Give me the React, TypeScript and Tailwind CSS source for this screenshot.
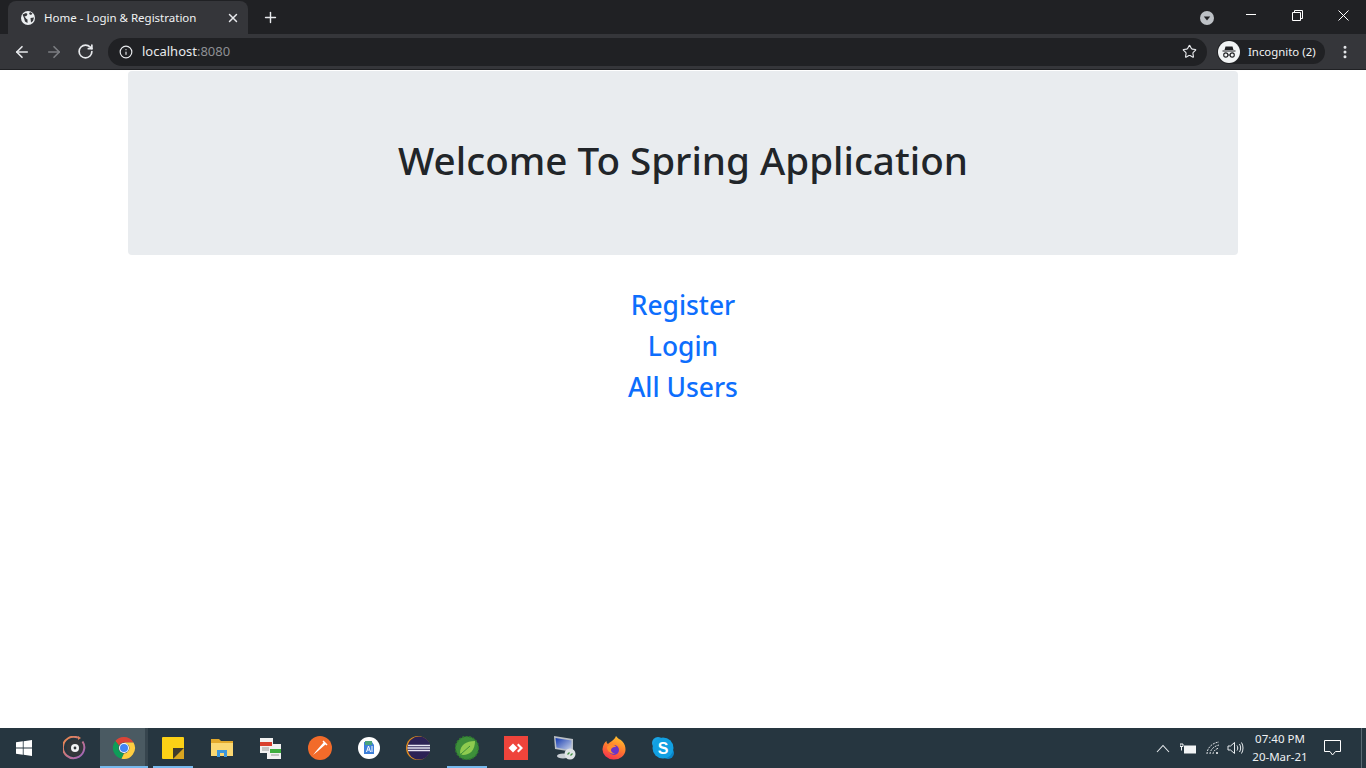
import { ArrowLeft, ArrowRight, Info, MoreVertical, Plus, RotateCw, Star, X } from "lucide-react";

const uiFont = "font-['Noto_Sans','Open_Sans',sans-serif]";

const GlobeIcon = () => (
  <svg width="16" height="16" viewBox="0 0 16 16">
    <circle cx="8" cy="8" r="7" fill="#eceff1" />
    <path d="M2.500 4.500 6 3l1.500 1-1 2-2 .5L6.500 9l1 .5v3.500L5 11.500 4 8ZM10 2l2.500 1.500L11 5 9 4ZM10.500 8l3.500-.5-1 3.500-2 1.500Z" fill="#35363a" />
  </svg>
);

const IncognitoIcon = () => (
  <svg width="22" height="22" viewBox="0 0 22 22">
    <circle cx="11" cy="11" r="11" fill="#f1f3f4" />
    <path d="M7.500 5.500h7l1 3.500h-9Z M4.500 9.500h13v1h-13Z" fill="#202124" />
    <circle cx="7.800" cy="14" r="2.100" fill="none" stroke="#202124" strokeWidth="1.100" />
    <circle cx="14.200" cy="14" r="2.100" fill="none" stroke="#202124" strokeWidth="1.100" />
    <path d="M9.800 14h2.400" stroke="#202124" strokeWidth="1" />
  </svg>
);

const TabStrip = () => (
  <div className="flex h-[34px] bg-[#202124] pl-2">
    <div className="mt-[1px] flex h-[33px] w-[240px] items-center rounded-t-lg bg-[#35363a] pl-3 pr-2">
      <GlobeIcon />
      <span className="ml-2 flex-1 truncate text-[11.5px] text-[#f1f3f4]">Home - Login &amp; Registration</span>
      <X size={14} strokeWidth={2.5} className="text-[#e8eaed]" />
    </div>
    <div className="ml-[14px] flex h-[34px] items-center">
      <Plus size={17} strokeWidth={2} className="text-[#e8eaed]" />
    </div>
    <div className="ml-auto flex items-center">
      <svg width="14" height="14" viewBox="0 0 14 14" className="mr-[14px] mt-[1px]">
        <circle cx="7" cy="7" r="7" fill="#bdc1c6" />
        <path d="M3.800 5.500h6.400L7 9.500Z" fill="#202124" />
      </svg>
      <div className="flex w-[46px] justify-center">
        <div className="mb-[6px] h-px w-[10px] bg-white" />
      </div>
      <div className="flex w-[46px] justify-center pb-1">
        <svg width="11" height="11" viewBox="0 0 11 11" fill="none" stroke="#fff" strokeWidth="1">
          <path d="M.5 2.500h8v8h-8ZM2.500 2.500v-2h8v8h-2" />
        </svg>
      </div>
      <div className="flex w-[46px] justify-center pb-1">
        <svg width="11" height="11" viewBox="0 0 11 11" fill="none" stroke="#fff" strokeWidth="1">
          <path d="M.5.500l10 10M10.500.500l-10 10" />
        </svg>
      </div>
    </div>
  </div>
);

const Toolbar = () => (
  <div className="flex h-[36px] items-center border-b border-[#202124] bg-[#35363a] pl-[13px]">
    <ArrowLeft size={18} strokeWidth={2.2} className="text-[#e8eaed]" />
    <ArrowRight size={18} strokeWidth={2.2} className="ml-[14px] text-[#7c7e82]" />
    <RotateCw size={17} strokeWidth={2.4} className="ml-[14px] text-[#e8eaed]" />
    <div className="ml-[14px] flex h-7 w-[1099px] items-center rounded-full bg-[#202124] pl-[11px] pr-[10px]">
      <Info size={14} strokeWidth={2} className="text-[#e8eaed]" />
      <span className="ml-[9px] mt-px text-[13px] text-[#e8eaed]">
        localhost<span className="text-[#8e9094]">:8080</span>
      </span>
      <Star size={15} strokeWidth={1.8} className="ml-auto text-[#e8eaed]" />
    </div>
    <div className="ml-[10px] flex h-6 w-[108px] items-center rounded-full bg-[#202124] pl-[1px]">
      <IncognitoIcon />
      <span className="ml-2 text-[11.4px] text-[#f1f3f4]">Incognito (2)</span>
    </div>
    <MoreVertical size={16} strokeWidth={2.5} className="ml-[12px] text-[#e8eaed]" />
  </div>
);

const WindowsLogo = () => (
  <svg width="16" height="16" viewBox="0 0 16 16" fill="#fff">
    <path d="M0 2.300 6.800 1.300V7.600H0ZM7.600 1.200 16 0V7.600H7.600ZM0 8.400H6.800V14.700L0 13.700ZM7.600 8.400H16V16L7.600 14.800Z" />
  </svg>
);

const taskIcons = [
  // disc player
  <svg key="disc" width="24" height="24" viewBox="0 0 24 24">
    <defs>
      <linearGradient id="discRing" x1="0" y1="0" x2="1" y2="1">
        <stop offset="0" stopColor="#f28a45" />
        <stop offset="1" stopColor="#9a62c4" />
      </linearGradient>
    </defs>
    <circle cx="12" cy="12" r="8.500" fill="#34373b" />
    <path d="M19.500 5.500A10.700 10.700 0 1 1 15 1.700" fill="none" stroke="url(#discRing)" strokeWidth="2" />
    <path d="M15 0v4l3-2Z" fill="#e0805a" />
    <circle cx="12" cy="12" r="4" fill="#f3f4f5" />
    <circle cx="12" cy="12" r="1.400" fill="#34373b" />
  </svg>,
  // chrome
  <svg key="chrome" width="24" height="24" viewBox="0 0 24 24">
    <path d="M12 1a11 11 0 0 1 9.500 5.500H12a5.500 5.500 0 0 0-5 3L3.300 5A11 11 0 0 1 12 1Z" fill="#db4437" />
    <path d="M3.300 5 7 9.500a5.500 5.500 0 0 0 5 8L9.500 22.700A11 11 0 0 1 3.300 5Z" fill="#0f9d58" />
    <path d="M21.500 6.500A11 11 0 0 1 9.500 22.700L12 17.500a5.500 5.500 0 0 0 4.500-8.500l-4.500-2.500Z" fill="#ffcd40" />
    <circle cx="12" cy="12" r="5" fill="#fff" />
    <circle cx="12" cy="12" r="4" fill="#4285f4" />
  </svg>,
  // sticky notes
  <svg key="sticky" width="22" height="22" viewBox="0 0 22 22">
    <rect width="22" height="22" rx="1" fill="#fcd116" />
    <path d="M22 11v11H11Z" fill="#d9a520" />
    <path d="M11 11h11L11 22Z" fill="#3f3a2c" />
  </svg>,
  // folder
  <svg key="folder" width="22" height="20" viewBox="0 0 22 20">
    <path d="M0 1h8l2 2h12v15H0Z" fill="#e3a92b" />
    <path d="M0 5h22v13H0Z" fill="#fbd872" />
    <path d="M6 12h10v7h-3v-4H9v4H6Z" fill="#3d97dc" />
  </svg>,
  // todo app
  <svg key="todo" width="24" height="24" viewBox="0 0 24 24">
    <path d="M1 2h13v6h8v15H8v-6H1Z" fill="#f1f1f1" />
    <path d="M1 6h12v4H1Z" fill="#d9402f" />
    <path d="M11 13h11v4H11Z" fill="#3fae3f" />
    <path d="M3 12h7M3 14h7M12 19h8" stroke="#9a9a9a" />
  </svg>,
  // postman style
  <svg key="orange" width="24" height="24" viewBox="0 0 24 24">
    <circle cx="12" cy="12" r="12" fill="#f26b2a" />
    <path d="M5 19 9 14l7-8 2 2-8 7Z" fill="#fff" />
    <path d="M15 5l4 4" stroke="#fff" strokeWidth="1.500" />
  </svg>,
  // android studio
  <svg key="studio" width="22" height="22" viewBox="0 0 22 22">
    <circle cx="11" cy="11" r="11" fill="#fff" />
    <path d="M6 5h8l2 3v9H6Z" fill="#3d7fd9" />
    <path d="M7 4h7v4H7Z" fill="#4aa37c" />
    <path d="M8.500 15l2-6 2 6M9.500 13h2M14 9v6" stroke="#fff" strokeWidth="1" fill="none" />
  </svg>,
  // eclipse
  <svg key="eclipse" width="24" height="24" viewBox="0 0 24 24">
    <circle cx="12" cy="12" r="12" fill="#e08c1f" />
    <circle cx="13" cy="12" r="11.500" fill="#2c2255" />
    <path d="M2 9.500h22M1.500 12h23M2 14.500h22" stroke="#e8e6f4" strokeWidth="1.300" />
  </svg>,
  // spring tool suite
  <svg key="spring" width="24" height="24" viewBox="0 0 24 24">
    <circle cx="12" cy="12" r="11.500" fill="#3d8f3a" strokeDasharray="2 1.500" stroke="#2f7a30" strokeWidth="1.500" />
    <path d="M5 17C5 9 11 5 20 5c0 9-5 14-12 14-1 0-2-1-3-2Z" fill="#8ecb4f" />
    <path d="M6 18 15 10" stroke="#3d8f3a" />
  </svg>,
  // anydesk
  <svg key="anydesk" width="24" height="24" viewBox="0 0 24 24">
    <path d="M0 0h24v24H0Z" fill="#ef443b" />
    <path d="M9 7.500 13.500 12 9 16.500 4.500 12Z" fill="#fff" />
    <path d="M14.500 7.500 19 12l-4.500 4.500-1.500-1.500 3-3-3-3Z" fill="#fff" />
  </svg>,
  // remote desktop
  <svg key="remote" width="24" height="24" viewBox="0 0 24 24">
    <defs>
      <linearGradient id="rdpScreen" x1="0" y1="0" x2="1" y2="1">
        <stop offset="0" stopColor="#1238b0" />
        <stop offset="1" stopColor="#cfd8ea" />
      </linearGradient>
    </defs>
    <path d="M1 0 20 3v13L2 13Z" fill="#b9bfc6" />
    <path d="M2.500 2 18.500 4.500v10L3.500 11.500Z" fill="url(#rdpScreen)" />
    <ellipse cx="10" cy="20" rx="6" ry="2.500" fill="#c9ced4" />
    <circle cx="17" cy="18" r="5.500" fill="#dfe3e6" />
    <path d="M14.500 18.500l2-2M19.500 17.500l-2 2" stroke="#3f8f3f" strokeWidth="1.200" />
  </svg>,
  // firefox
  <svg key="firefox" width="24" height="24" viewBox="0 0 24 24">
    <defs>
      <linearGradient id="foxBody" x1="0.700" y1="0" x2="0.300" y2="1">
        <stop offset="0" stopColor="#ffc42e" />
        <stop offset="0.500" stopColor="#ff7a2e" />
        <stop offset="1" stopColor="#f5304f" />
      </linearGradient>
    </defs>
    <path d="M14 0c2 3 4 3 6 5 3 3 3.500 6 3.500 9A11.500 10 0 1 1 .5 13C1 9 2.500 6.500 4.500 5c0 1.500.5 2.500 1.500 3 2-2.500 6-3 8-8Z" fill="url(#foxBody)" />
    <circle cx="12" cy="14" r="5" fill="#6a34c8" />
    <path d="M5 11c2-3 8-3 9 0-3-.5-5 1-5 3 0 2 2 3.500 4 3.500-4 1-8-2-8-6.500Z" fill="#ff8f2e" />
  </svg>,
  // skype
  <svg key="skype" width="24" height="24" viewBox="0 0 24 24">
    <circle cx="7" cy="7" r="6" fill="#1aa5e6" />
    <circle cx="17" cy="17" r="6" fill="#0a84c8" />
    <circle cx="12" cy="12" r="10.500" fill="#12a0e2" />
    <text x="12" y="17.500" textAnchor="middle" fontSize="16" fontWeight="700" fill="#fff" fontFamily="Liberation Sans, sans-serif">S</text>
  </svg>,
];

const Taskbar = () => (
  <div className="flex h-10 items-center bg-[#263640]">
    <div className="flex w-[50px] justify-center pr-[3px]">
      <WindowsLogo />
    </div>
    {taskIcons.map((icon, i) => (
      <div
        key={i}
        className={
          "relative flex h-10 items-center justify-center " +
          (i === 1 ? "ml-px w-[48px] bg-[#4a5a62]" : "w-[49px]")
        }
      >
        {icon}
        {(i === 2 || i === 8) && <div className="absolute bottom-0 left-[5px] h-0.5 w-10 bg-[#76b9ed]" />}
        {i === 1 && (
          <>
            <div className="absolute right-0 top-0 h-10 w-[3px] bg-[#36454e]" />
            <div className="absolute bottom-0 left-0 h-0.5 w-[48px] bg-[#76b9ed]" />
          </>
        )}
      </div>
    ))}
    <div className="ml-auto flex items-center pr-[4px] text-white">
      <svg width="14" height="9" viewBox="0 0 14 9" fill="none" stroke="#e8ecef" strokeWidth="1.100" className="mr-[10px]">
        <path d="M1 8 7 1.500 13 8" />
      </svg>
      <svg width="17" height="11" viewBox="0 0 17 11" className="mr-[9px]">
        <path d="M4 2.500h12v8H4Z" fill="#f2f4f5" />
        <path d="M0 1h3v2.500H0ZM1.500 3.500v4" stroke="#f2f4f5" fill="#263640" />
      </svg>
      <svg width="14" height="14" viewBox="0 0 14 14" fill="none" stroke="#dfe3e6" strokeWidth="1" className="mr-[7px]">
        <path d="M1 13C1 7 6 2 13 1M4 13c0-4 4-8 9-9M7 13c0-2 2-5 6-6" strokeDasharray="2 1" />
        <circle cx="11" cy="12" r="1" fill="#fff" stroke="none" />
      </svg>
      <svg width="17" height="14" viewBox="0 0 17 14" fill="none" stroke="#e8ecef" strokeWidth="1" className="mr-[8px]">
        <path d="M1 5h2.500L7.500 1.500v11L3.500 9H1ZM10 4.500c1 1.500 1 3.500 0 5M12.500 3c1.500 2.500 1.500 5.500 0 8M14.500 1.500c2 3 2 8 0 11" />
      </svg>
      <div className={`flex w-[56px] flex-col items-center whitespace-nowrap text-[11.5px] leading-[18px] text-[#eef1f3] ${uiFont}`}>
        <span>07:40 PM</span>
        <span>20-Mar-21</span>
      </div>
      <svg width="17" height="16" viewBox="0 0 17 16" fill="none" stroke="#fff" strokeWidth="1" className="ml-[16px]">
        <path d="M.5.500h16v11h-5L8.500 15 6 11.500H.5Z" />
      </svg>
      <div className="ml-5 h-10 w-px bg-[#5a6a73]" />
    </div>
  </div>
);

export default function App() {
  return (
    <div className={`flex h-screen flex-col overflow-hidden bg-white ${uiFont}`}>
      <TabStrip />
      <Toolbar />
      <main className="flex-1">
        <div className="mx-auto w-[1110px]">
          <div className="mt-px flex h-[184px] items-start justify-center rounded bg-[#e9ecef] pt-[63px]">
            <h1 className="text-[38.6px] font-medium leading-[52px] text-[#212529]">Welcome To Spring Application</h1>
          </div>
          <nav className="mt-[30px] flex flex-col items-center text-[26.4px] font-medium leading-[41px] text-[#0d6efd]">
            <a href="#">Register</a>
            <a href="#">Login</a>
            <a href="#">All Users</a>
          </nav>
        </div>
      </main>
      <Taskbar />
    </div>
  );
}
